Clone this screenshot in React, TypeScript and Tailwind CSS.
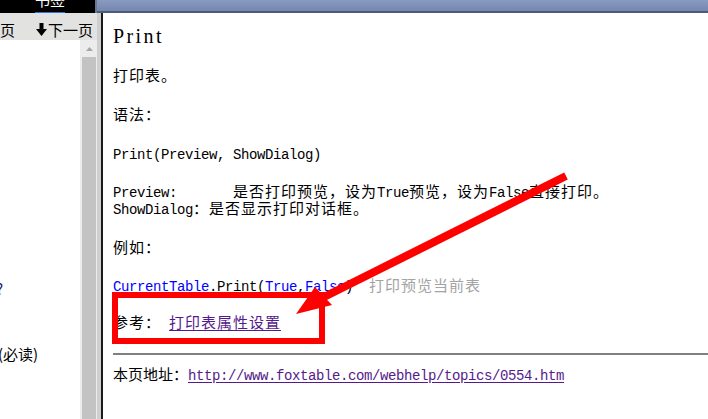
import React from "react";

const MONO = "font-['Liberation_Mono',monospace] text-[14px] tracking-[-0.4px]";
const CJK16 = "font-['Noto_Sans_CJK_SC',sans-serif] text-[15px] tracking-[1px]";
const CJK15 = "font-['Noto_Sans_CJK_SC',sans-serif] text-[15px] tracking-[0px]";

function T({ s, cjk = CJK16 }: { s: string; cjk?: string }) {
  const parts = s.match(/[\x00-\x7f]+|[^\x00-\x7f]+/g) ?? [];
  return (
    <>
      {parts.map((p, i) =>
        p.charCodeAt(0) < 128 ? (
          <span key={i} className={MONO}>
            {p}
          </span>
        ) : (
          <span key={i} className={cjk}>
            {p}
          </span>
        )
      )}
    </>
  );
}

const LINE =
  "h-[18px] leading-[18px] whitespace-pre text-black font-['Noto_Sans_CJK_SC',sans-serif] text-[15px]";
const LINE17 =
  "h-[17px] leading-[17px] whitespace-pre text-black font-['Noto_Sans_CJK_SC',sans-serif] text-[15px]";

function DownArrow() {
  return (
    <svg width="11" height="13" viewBox="0 0 11 13" className="shrink-0">
      <rect x="3.5" y="0" width="4" height="7" fill="#000" />
      <polygon points="0,6 11,6 5.5,13" fill="#000" />
    </svg>
  );
}

export default function App() {
  return (
    <div className="relative w-[708px] h-[419px] overflow-hidden bg-white flex flex-col">
      {/* top bar */}
      <div className="h-[13px] flex shrink-0">
        <div className="w-[95px] bg-black flex items-end overflow-hidden">
          <div className="ml-[35px] h-[26px] leading-[26px] text-white font-['Noto_Sans_CJK_SC',sans-serif] text-[15px] border-b border-[#2f6fe0] shrink-0">
            书签
          </div>
        </div>
        <div className="w-[2px] bg-[#6b7792]" />
        <div className="flex-1 bg-gradient-to-b from-[#8a9bc0] to-[#7387b0] border-b-2 border-[#4f5b76]" />
      </div>

      {/* main row */}
      <div className="flex flex-1 min-h-0">
        {/* left panel */}
        <div className="w-[97px] flex flex-col shrink-0">
          <div className="h-[27px] bg-[#e2e2e0] flex items-center pt-[6px] text-black font-['Noto_Sans_CJK_SC',sans-serif] text-[15px] leading-[18px] overflow-hidden whitespace-nowrap">
            <span>页</span>
            <span className="ml-[21px] flex items-center">
              <DownArrow />
              <span className="ml-[1px]">下一页</span>
            </span>
          </div>
          <div className="flex flex-1 min-h-0">
            <div className="w-[80px] bg-white overflow-hidden flex flex-col font-['Noto_Sans_CJK_SC',sans-serif] text-[15px] leading-[18px] whitespace-nowrap">
              <div className="mt-[240px] h-[18px] -ml-[4px] text-[#1b1b70]">?</div>
              <div className="mt-[47px] h-[18px] -ml-[2px] text-black">(必读)</div>
            </div>
            <div className="w-[17px] bg-[#ececec] flex flex-col">
              <div className="h-[17px] flex items-center justify-center pl-[1px]">
                <svg width="7" height="4" viewBox="0 0 7 4">
                  <polygon points="0,4 7,4 3.5,0" fill="#a6a6a6" />
                </svg>
              </div>
              <div className="flex-1 ml-[2px] mr-[1px] bg-[#c3c3c3]" />
            </div>
          </div>
        </div>
        {/* splitter */}
        <div className="w-[4px] bg-[#cfcfcf] shrink-0" />
        <div className="w-[2px] bg-[#1a1a1a] shrink-0" />

        {/* content */}
        <div className="flex-1 bg-white pl-[10px] flex flex-col">
          <div className="mt-[11px] h-[24px] leading-[24px] font-['Liberation_Serif',serif] text-[20px] tracking-[2.4px] text-black">
            Print
          </div>
          <div className={`mt-[18px] ${LINE}`}>
            <T s="打印表。" />
          </div>
          <div className={`mt-[21px] ${LINE}`}>
            <T s="语法：" />
          </div>
          <div className={`mt-[21px] ${LINE}`}>
            <T s="Print(Preview, ShowDialog)" />
          </div>
          <div className="mt-[20px] flex flex-col">
            <div className={LINE17}>
              <T s="Preview:       是否打印预览，设为True预览，设为False直接打印。" />
            </div>
            <div className={LINE17}>
              <T s="ShowDialog：是否显示打印对话框。" />
            </div>
          </div>
          <div className={`mt-[22px] ${LINE}`}>
            <T s="例如：" />
          </div>
          <div className={`mt-[20px] ${LINE}`}>
            <span className={`${MONO} text-[#0000ff]`}>CurrentTable</span>
            <span className={MONO}>.Print(</span>
            <span className={`${MONO} text-[#0000ff]`}>True</span>
            <span className={MONO}>,</span>
            <span className={`${MONO} text-[#0000ff]`}>False</span>
            <span className={MONO}>)  </span>
            <span className={`${CJK16} text-[#a3a3a3]`}>打印预览当前表</span>
          </div>
          <div className={`mt-[19px] ${LINE}`}>
            <T s="参考： " />
            <span className={`${CJK16} text-[#551a8b] underline underline-offset-[2px]`}>打印表属性设置</span>
          </div>
          <div className="mt-[22px] h-[2px] bg-[#808080]" />
          <div className={`mt-[10px] ${LINE}`}>
            <T s="本页地址：" cjk={CJK15} />
            <span className={`${MONO} text-[#551a8b] underline underline-offset-[2px]`}>
              http://www.foxtable.com/webhelp/topics/0554.htm
            </span>
          </div>
        </div>
      </div>

      {/* annotation overlay */}
      <svg
        className="absolute left-0 top-0 pointer-events-none"
        width="708"
        height="419"
        viewBox="0 0 708 419"
      >
        <rect x="115" y="295" width="207" height="46" fill="none" stroke="#ff0000" strokeWidth="6" />
        <line x1="566" y1="176" x2="322" y2="298" stroke="#ff0000" strokeWidth="8" />
        <polygon points="296,314 315,287 332,305" fill="#ff0000" />
      </svg>
    </div>
  );
}
